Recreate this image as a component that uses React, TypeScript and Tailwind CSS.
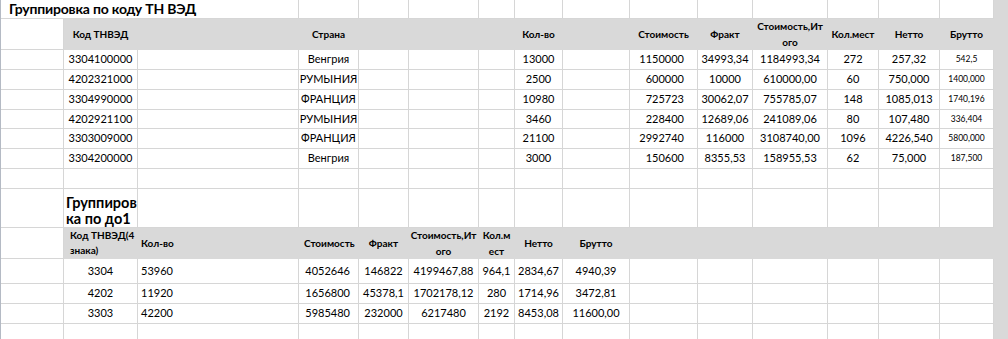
import React from "react";

type Align = "c" | "l" | "r";

type CellProps = {
  children?: React.ReactNode;
  span?: number;
  align?: Align;
  gray?: boolean;
  className?: string;
};

const spanCls: Record<number, string> = {
  1: "col-span-1",
  2: "col-span-2",
  3: "col-span-3",
};

const alignCls: Record<Align, string> = {
  c: "justify-center text-center",
  l: "justify-start text-left",
  r: "justify-end text-right",
};

const Cell = ({ children, span = 1, align = "c", gray, className = "" }: CellProps) => (
  <div
    className={`flex items-center overflow-hidden whitespace-nowrap border-r border-b ${
      gray ? "bg-[#d9d9d9] border-[#d9d9d9]" : "border-[#d6d6d6]"
    } ${spanCls[span]} ${alignCls[align]} ${className}`}
  >
    {children}
  </div>
);

const Head = ({ children, align = "c", className = "" }: CellProps) => (
  <Cell gray align={align} className={`text-[10px] leading-[15px] font-bold ${className}`}>
    {children}
  </Cell>
);

const Empty = ({ n }: { n: number }) => (
  <>
    {Array.from({ length: n }).map((_, i) => (
      <Cell key={i} />
    ))}
  </>
);

const Gray = ({ n }: { n: number }) => (
  <>
    {Array.from({ length: n }).map((_, i) => (
      <Cell key={i} gray />
    ))}
  </>
);

const byCode = [
  ["3304100000", "Венгрия", "13000", "1150000", "34993,34", "1184993,34", "272", "257,32", "542,5"],
  ["4202321000", "РУМЫНИЯ", "2500", "600000", "10000", "610000,00", "60", "750,000", "1400,000"],
  ["3304990000", "ФРАНЦИЯ", "10980", "725723", "30062,07", "755785,07", "148", "1085,013", "1740,196"],
  ["4202921100", "РУМЫНИЯ", "3460", "228400", "12689,06", "241089,06", "80", "107,480", "336,404"],
  ["3303009000", "ФРАНЦИЯ", "21100", "2992740", "116000", "3108740,00", "1096", "4226,540", "5800,000"],
  ["3304200000", "Венгрия", "3000", "150600", "8355,53", "158955,53", "62", "75,000", "187,500"],
];

const byGroup = [
  ["3304", "53960", "4052646", "146822", "4199467,88", "964,1", "2834,67", "4940,39"],
  ["4202", "11920", "1656800", "45378,1", "1702178,12", "280", "1714,96", "3472,81"],
  ["3303", "42200", "5985480", "232000", "6217480", "2192", "8453,08", "11600,00"],
];

export default function App() {
  return (
    <div className="flex h-[339px] w-[1008px] overflow-hidden bg-white text-black font-['Lato','Liberation_Sans',sans-serif]">
      <div className="border-l border-[#b4bac4]">
        <div className="grid w-[993px] grid-cols-[63px_74px_161px_60px_50px_70px_36px_48px_67px_68px_55px_75px_51px_61px_54px] grid-rows-[19px_31px_20px_20px_20px_19px_20px_20px_20px_39px_31px_25px_20px_20px_20px] text-[11px]">
          {/* title row */}
          <Cell span={3} align="l" className="pl-[8px] text-[14px] leading-[18px] font-bold tracking-[-0.2px]">
            Группировка по коду ТН ВЭД
          </Cell>
          <Empty n={12} />

          {/* header */}
          <Cell />
          <Head>Код ТНВЭД</Head>
          <Gray n={1} />
          <Head>Страна</Head>
          <Gray n={3} />
          <Head>Кол-во</Head>
          <Gray n={1} />
          <Head>Стоимость</Head>
          <Head>Фракт</Head>
          <Head className="leading-[16px]">
            Стоимость,Ит
            <br />
            ого
          </Head>
          <Head>Кол.мест</Head>
          <Head>Нетто</Head>
          <Head className="text-[8.5px]">Брутто</Head>

          {byCode.map((r) => (
            <React.Fragment key={r[0]}>
              <Cell />
              <Cell>{r[0]}</Cell>
              <Cell />
              <Cell>{r[1]}</Cell>
              <Empty n={3} />
              <Cell>{r[2]}</Cell>
              <Cell />
              <Cell align="r" className="pr-[13px]">
                {r[3]}
              </Cell>
              <Cell>{r[4]}</Cell>
              <Cell>{r[5]}</Cell>
              <Cell>{r[6]}</Cell>
              <Cell>{r[7]}</Cell>
              <Cell className="text-[8.5px]">{r[8]}</Cell>
            </React.Fragment>
          ))}

          <Empty n={15} />

          {/* second grouping */}
          <Cell />
          <Cell align="l" className="items-end whitespace-normal pl-[2px] text-[14.5px] leading-[16px] font-bold">
            <span>
              Группиров
              <br />
              ка по до1
            </span>
          </Cell>
          <Empty n={13} />

          <Cell />
          <Head align="l" className="pl-[6px]">
            <span>
              Код ТНВЭД(4
              <br />
              знака)
            </span>
          </Head>
          <Head align="l" className="pl-[3px]">
            Кол-во
          </Head>
          <Head align="l" className="pl-[5px]">
            Стоимость
          </Head>
          <Head>Фракт</Head>
          <Head className="leading-[16px]">
            Стоимость,Ит
            <br />
            ого
          </Head>
          <Head className="leading-[16px]">
            Кол.м
            <br />
            ест
          </Head>
          <Head>Нетто</Head>
          <Head>Брутто</Head>
          <Gray n={6} />

          {byGroup.map((r) => (
            <React.Fragment key={r[0]}>
              <Cell />
              <Cell>{r[0]}</Cell>
              <Cell align="l" className="pl-[3px]">
                {r[1]}
              </Cell>
              <Cell align="r" className="pr-[8px]">
                {r[2]}
              </Cell>
              <Cell>{r[3]}</Cell>
              <Cell>{r[4]}</Cell>
              <Cell>{r[5]}</Cell>
              <Cell>{r[6]}</Cell>
              <Cell>{r[7]}</Cell>
              <Empty n={6} />
            </React.Fragment>
          ))}

          <Empty n={15} />
        </div>
      </div>
      <div className="flex-1 bg-[#d9d9d9]" />
    </div>
  );
}
